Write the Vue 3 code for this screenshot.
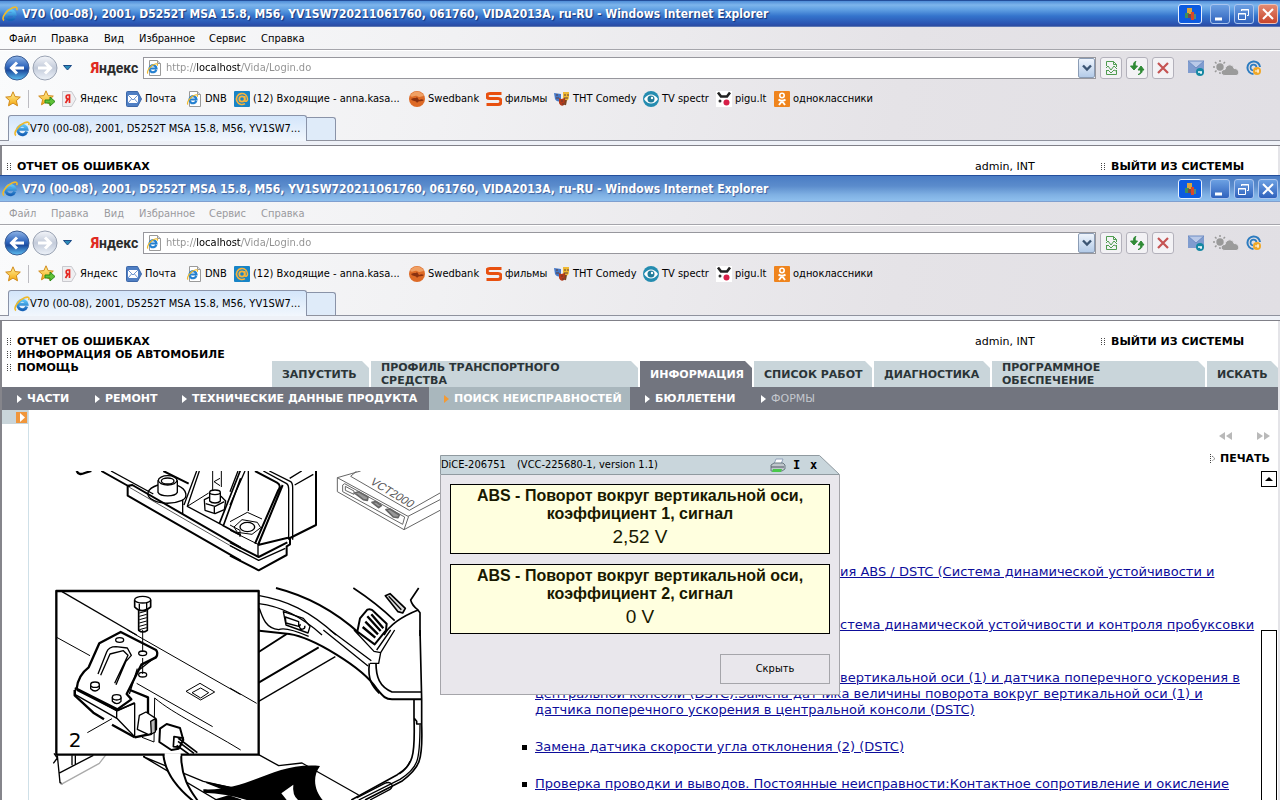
<script setup>
const title = 'V70 (00-08), 2001, D5252T MSA 15.8, M56, YV1SW720211061760, 061760, VIDA2013A, ru-RU - Windows Internet Explorer'
const tabTitle = 'V70 (00-08), 2001, D5252T MSA 15.8, M56, YV1SW7...'
const windows = [
  { id: 'back', inactive: false },
  { id: 'front', inactive: true }
]
const menu = ['Файл', 'Правка', 'Вид', 'Избранное', 'Сервис', 'Справка']
const favorites = [
  { icon: 'ya', label: 'Яндекс' },
  { icon: 'post', label: 'Почта' },
  { icon: 'iepage', label: 'DNB' },
  { icon: 'inbox', label: '(12) Входящие - anna.kasa...' },
  { icon: 'swed', label: 'Swedbank' },
  { icon: 'films', label: 'фильмы' },
  { icon: 'masks', label: 'ТНТ Comedy' },
  { icon: 'eye', label: 'TV spectr' },
  { icon: 'pigu', label: 'pigu.lt' },
  { icon: 'ok', label: 'одноклассники' }
]
const tabs = [
  { label: 'ЗАПУСТИТЬ' },
  { label: 'ПРОФИЛЬ ТРАНСПОРТНОГО СРЕДСТВА', wide: true },
  { label: 'ИНФОРМАЦИЯ', on: true },
  { label: 'СПИСОК РАБОТ' },
  { label: 'ДИАГНОСТИКА' },
  { label: 'ПРОГРАММНОЕ ОБЕСПЕЧЕНИЕ', wide: true },
  { label: 'ИСКАТЬ' }
]
const sections = ['ЧАСТИ', 'РЕМОНТ', 'ТЕХНИЧЕСКИЕ ДАННЫЕ ПРОДУКТА', 'ПОИСК НЕИСПРАВНОСТЕЙ', 'БЮЛЛЕТЕНИ', 'ФОРМЫ']
const signals = [
  { name: 'ABS - Поворот вокруг вертикальной оси, коэффициент 1, сигнал', value: '2,52 V' },
  { name: 'ABS - Поворот вокруг вертикальной оси, коэффициент 2, сигнал', value: '0 V' }
]
</script>

<template>
  <svg class="defs" aria-hidden="true">
    <defs>
      <linearGradient id="blueBall" x1="0" y1="0" x2="0" y2="1">
        <stop offset="0" stop-color="#8fb4e6" /><stop offset=".45" stop-color="#2f66bd" /><stop offset=".6" stop-color="#1c4c9f" /><stop offset="1" stop-color="#5fc0f2" />
      </linearGradient>
      <linearGradient id="greyBall" x1="0" y1="0" x2="0" y2="1">
        <stop offset="0" stop-color="#f4f6fa" /><stop offset=".5" stop-color="#c3cbda" /><stop offset="1" stop-color="#eef3fa" />
      </linearGradient>
      <linearGradient id="gold" x1="0" y1="0" x2="0" y2="1">
        <stop offset="0" stop-color="#fff3a0" /><stop offset="1" stop-color="#f5a70c" />
      </linearGradient>
      <linearGradient id="ieBlue" x1="0" y1="0" x2="0" y2="1">
        <stop offset="0" stop-color="#5cc4f7" /><stop offset="1" stop-color="#1763b8" />
      </linearGradient>
      <symbol id="ie" viewBox="0 0 16 16">
        <path d="M12.8 10.6A4.700 4.700 0 1 1 13 8.300H4" fill="none" stroke="url(#ieBlue)" stroke-width="3" />
        <path d="M2 14.5C-1.500 12 5 4 10.500 1.800 14 .4 16 1.200 14.600 4.200" fill="none" stroke="#efb92a" stroke-width="1.600" />
      </symbol>
      <symbol id="iepage" viewBox="0 0 16 16">
        <path d="M3.500.5h8l3 3v12h-11z" fill="#fff" stroke="#9a9a9a" />
        <path d="M11.500.5v3h3" fill="#ddd" stroke="#9a9a9a" />
        <path d="M10.300 9.900A3.500 3.500 0 1 1 10.500 8.500H4.500" fill="none" stroke="#2580d0" stroke-width="2.200" />
        <path d="M2 13.500C0 11.500 5 5 9 4c2-.6 3 0 2.200 1.800" fill="none" stroke="#efb92a" stroke-width="1.200" />
      </symbol>
      <symbol id="ya" viewBox="0 0 16 16">
        <path d="M1.500.5h9L15 8l-4.500 7.500h-9z" fill="#efeff1" stroke="#c9c9ce" />
        <path d="M8.500 12V4H7C4.600 4 4.600 8 7 8h1.500M7 8l-2.500 4" fill="none" stroke="#e52620" stroke-width="1.700" />
      </symbol>
      <symbol id="post" viewBox="0 0 16 16">
        <path d="M1.500.5h10L15.500 8l-4 7.500h-10a1 1 0 0 1-1-1v-13a1 1 0 0 1 1-1z" fill="#4f7fc4" stroke="#3c67a8" />
        <path d="M2 4h10v8H2z" fill="#fff" /><path d="M2 4l5 5 5-5M2 12l3.500-4M12 12L8.500 8" fill="none" stroke="#6c94cf" />
      </symbol>
      <symbol id="inbox" viewBox="0 0 16 16">
        <rect width="16" height="16" rx="1" fill="#1784c7" />
        <circle cx="8" cy="8" r="2.700" fill="none" stroke="#f7b43c" stroke-width="1.800" />
        <path d="M10.800 5v4.500c.5 1.500 2.700.8 2.700-1.500a5.500 5.500 0 1 0-2.500 4.600" fill="none" stroke="#f7b43c" stroke-width="1.600" />
      </symbol>
      <symbol id="swed" viewBox="0 0 16 16">
        <circle cx="8" cy="8" r="8" fill="#dd6a26" /><path d="M1 5c3-6 11-6 14 0-3 0-4 2-7 0-3-1-4 2-7 0z" fill="#f0a064" />
        <path d="M2 8c3-2 5 0 6-2l2 3c2-1 3-1 5 0-2 2-5 0-7 3-1-3-4-1-6-4z" fill="#8b3210" />
      </symbol>
      <symbol id="films" viewBox="0 0 16 16">
        <path d="M15.500 2.500H4c-4 0-4 5 0 5h8c4 0 4 6 0 6H.5" fill="none" stroke="#e8500f" stroke-width="3.200" />
      </symbol>
      <symbol id="masks" viewBox="0 0 16 16">
        <path d="M0 2l7 1v6c-2 3-5 1-6-1z" fill="#4478c8" /><path d="M9 1h6v5c0 4-4 5-6 3z" fill="#efb934" /><path d="M5 7c3 2 4 0 6 0v5c-1 4-5 3-6 0z" fill="#b53b1b" />
        <path d="M2 4h2M10 4h2m1 0h2M10 7h4M7 10h2m-1 3h2M2 7h3" stroke="#613d36" /><path d="M12 9l-1 5" stroke="#7b4321" stroke-width="2" />
      </symbol>
      <symbol id="eye" viewBox="0 0 16 16">
        <circle cx="8" cy="8" r="8" fill="#248cb0" /><path d="M1 8c4-6 10-6 14 0-4 6-10 6-14 0z" fill="#fff" /><circle cx="8" cy="8" r="3.500" fill="#217b99" /><circle cx="9" cy="7" r="1.200" fill="#fff" />
      </symbol>
      <symbol id="pigu" viewBox="0 0 16 16">
        <rect width="16" height="16" fill="#fff" /><path d="M2 1.500l3 4h6l3-4" fill="none" stroke="#222" stroke-width="2.600" /><circle cx="10.500" cy="11.500" r="3" fill="#d71f48" /><circle cx="4" cy="10" r="1.500" fill="#333" />
      </symbol>
      <symbol id="ok" viewBox="0 0 16 16">
        <rect width="16" height="16" rx="1" fill="#ef841d" /><circle cx="8" cy="4.500" r="2.200" fill="none" stroke="#fff" stroke-width="1.600" />
        <path d="M4.500 8.500c2 1.600 5 1.600 7 0M8 10l-3 4m3-4l3 4" fill="none" stroke="#fff" stroke-width="2" />
      </symbol>
      <symbol id="star" viewBox="0 0 16 16">
        <path d="M8 .8l2.100 4.800 5.200.5-3.900 3.500 1.100 5.200L8 12.100l-4.500 2.700 1.100-5.200L.7 6.100l5.200-.5z" fill="url(#gold)" stroke="#d08a1b" />
      </symbol>
      <symbol id="flag" viewBox="0 0 14 14">
        <path d="M4 1h5v6H4z" fill="#d9a53c" /><path d="M2 6h4v5H2z" fill="#3f8f5a" /><path d="M8 5h3v8H8z" fill="#d94829" /><path d="M5 7h3v4H5z" fill="#7a4a4a" /><path d="M11 7h2v5h-2z" fill="#4f8e7c" />
      </symbol>
    </defs>
  </svg>

  <div class="desktop">
    <section v-for="w in windows" :key="w.id" class="window" :class="{ inactive: w.inactive }">
      <header class="titlebar">
        <svg class="i16"><use href="#ie" /></svg>
        <h1>{{ title }}</h1>
        <button class="lang" aria-label="Язык"><svg width="14" height="14"><use href="#flag" /></svg></button>
        <button class="wbtn" aria-label="Свернуть"><svg width="18" height="18"><path d="M4 14h7" stroke="#fff" stroke-width="3" /></svg></button>
        <button class="wbtn" aria-label="Восстановить"><svg width="18" height="18" fill="none" stroke="#fff"><path d="M3.500 8.500h7v6h-7zM3 9h8M6.500 6V4.500h7v6H12M6 5h8" /></svg></button>
        <button class="wbtn close" aria-label="Закрыть"><svg width="18" height="18"><path d="M4 4l10 10M14 4L4 14" stroke="#fff" stroke-width="2" /></svg></button>
      </header>

      <div class="chrome">
        <nav class="menu"><button v-for="m in menu" :key="m">{{ m }}</button></nav>

        <div class="address-row">
          <div class="travel">
            <button aria-label="Назад"><svg width="26" height="26"><circle cx="13" cy="13" r="12" fill="url(#blueBall)" stroke="#3b5d94" /><path d="M20 13H8m5-5.500L7.500 13l5.500 5.500" fill="none" stroke="#fff" stroke-width="3" /></svg></button>
            <button aria-label="Вперед"><svg width="26" height="26"><circle cx="13" cy="13" r="12" fill="url(#greyBall)" stroke="#9aa3b3" /><path d="M6 13h12m-5-5.500l5.500 5.500-5.500 5.500" fill="none" stroke="#fff" stroke-width="3" /></svg></button>
            <button class="recent" aria-label="Последние страницы"><svg width="9" height="6"><path d="M.5.5h8L4.500 5z" fill="#2b8bb8" stroke="#1c4a86" /></svg></button>
          </div>
          <div class="yandex"><b>Я</b>ндекс</div>
          <div class="address">
            <svg class="i16"><use href="#iepage" /></svg>
            <input type="text" value="http://localhost/Vida/Login.do" aria-label="Адрес" />
            <button aria-label="Показать список"><svg width="10" height="8"><path d="M1 1.500l4 4 4-4" fill="none" stroke="#3c5573" stroke-width="2.400" /></svg></button>
          </div>
          <div class="tools">
            <button aria-label="Совместимость"><svg width="16" height="16" fill="none" stroke="#4f9c50"><path d="M3.500 6V1.500h7l3 3V7M10.500 1.500v3h3M3.500 10v4.500h10V10M3 8l2-2 3 4 3-4 3 3M3 12l2-2 3 3 3-3 2 1" /></svg></button>
            <button aria-label="Обновить"><svg width="16" height="16"><path d="M7 1.500C4 2 4.500 5 4.500 6H1.500L5 10l3.500-4H6.300C6.300 4 6 3 7 1.500zM9 14.500c3-.5 2.500-3.500 2.500-4.500H9l3-4 3 4h-1.700c0 2-.8 4-4.300 4.500z" fill="#2f8a35" stroke="#2f8a35" /></svg></button>
            <button aria-label="Остановить"><svg width="16" height="16"><path d="M3 3l10 10M13 3L3 13" stroke="#c55353" stroke-width="2.200" /></svg></button>
          </div>
          <div class="extras">
            <svg width="17" height="16"><path d="M0 1h16v12H0z" fill="#7f9ccf" /><path d="M0 1h16L8 8z" fill="#b9c9e8" stroke="#6f8dc3" /><circle cx="12" cy="12" r="4" fill="#1688a3" /><path d="M10 12h4m-1 0v2" stroke="#fff" stroke-width="1.300" /></svg>
            <svg width="27" height="16"><circle cx="8" cy="7" r="3.700" fill="#999" /><g stroke="#999" stroke-width="1.500"><path d="M8 0v2M1 7h2M3 2l1.500 1.500M13 2l-1.500 1.500M3 12l1.500-1.500M8 12v2" /></g><path d="M13 15.500c-5 0-5-6 0-6 1-6 8-6 9-1 6 0 6 7 2 7z" fill="#9b9b9b" stroke="#e3e1e6" /></svg>
            <svg width="16" height="16"><path d="M14 7a6.300 6.300 0 1 0-6.500 7" fill="none" stroke="#2d7cc0" stroke-width="2" /><path d="M10.500 7A3 3 0 1 0 7 10.500" fill="none" stroke="#2d7cc0" stroke-width="1.700" /><circle cx="11" cy="11" r="4" fill="#f0a829" /><path d="M9 11h4m-1-2v4" stroke="#fff" /></svg>
          </div>
        </div>

        <nav class="favbar">
          <button class="star" aria-label="Избранное"><svg class="i16"><use href="#star" /></svg></button>
          <button class="star add" aria-label="Добавить в избранное"><svg width="18" height="17"><use href="#star" width="16" height="16" /><path d="M7 10h5V7l5 4.500-5 4.500v-3H7z" fill="#5fc238" stroke="#2c8a18" /></svg></button>
          <div class="favs">
            <a v-for="f in favorites" :key="f.label" href="#"><svg class="i16"><use :href="'#' + f.icon" /></svg>{{ f.label }}</a>
          </div>
        </nav>

        <div class="browser-tabs">
          <button class="page-tab"><svg class="i16"><use href="#ie" /></svg><span>{{ tabTitle }}</span></button>
          <button class="new-tab" aria-label="Новая вкладка"></button>
        </div>
      </div>

      <div class="page">
        <div class="page-head">
          <div class="links">
            <a href="#"><svg width="4" height="8"><path d="M.5 0v8M3.500 0v8" stroke="#444" stroke-dasharray="1 1" /></svg>ОТЧЕТ ОБ ОШИБКАХ</a>
            <template v-if="w.inactive">
              <a href="#"><svg width="4" height="8"><path d="M.5 0v8M3.500 0v8" stroke="#444" stroke-dasharray="1 1" /></svg>ИНФОРМАЦИЯ ОБ АВТОМОБИЛЕ</a>
              <a href="#"><svg width="4" height="8"><path d="M.5 0v8M3.500 0v8" stroke="#444" stroke-dasharray="1 1" /></svg>ПОМОЩЬ</a>
            </template>
          </div>
          <span class="user">admin, INT</span>
          <a class="logout" href="#"><svg width="4" height="8"><path d="M.5 0v8M3.500 0v8" stroke="#444" stroke-dasharray="1 1" /></svg>ВЫЙТИ ИЗ СИСТЕМЫ</a>
        </div>

        <template v-if="w.inactive">
          <nav class="tabs">
            <button v-for="t in tabs" :key="t.label" :class="{ on: t.on, wide: t.wide }">{{ t.label }}</button>
          </nav>
          <nav class="sections">
            <button v-for="(s, i) in sections" :key="s" :class="{ on: i === 3, off: i === 5 }"><svg width="5" height="8"><path d="M0 0l5 4-5 4z" fill="currentColor" /></svg>{{ s }}</button>
          </nav>

          <div class="body">
            <aside><button aria-label="Открыть панель"><svg width="11" height="11"><path d="M4 1l5 4.500L4 10z" fill="#fff" /></svg></button></aside>
            <main>
              <div class="toolbar">
                <div class="pager">
                  <button aria-label="Предыдущий"><svg width="13" height="8"><path d="M6 0v8L0 4zM13 0v8L7 4z" fill="#b9b9b9" /></svg></button>
                  <button aria-label="Следующий"><svg width="13" height="8"><path d="M0 0v8l6-4zM7 0v8l6-4z" fill="#b9b9b9" /></svg></button>
                </div>
                <a href="#"><svg width="6" height="9"><path d="M.5 0v9" stroke="#444" stroke-dasharray="1 1" /><path d="M2 2l3 2.500L2 7" fill="none" stroke="#444" stroke-dasharray="1 1" /></svg>ПЕЧАТЬ</a>
              </div>

              <div class="content">
                <svg class="drawing" viewBox="0 18 1230 987" fill="none" stroke="#000" stroke-width="4" stroke-linejoin="round" role="img" aria-label="Расположение датчика">
                  <!-- control unit bracket -->
                  <g>
                    <path d="M140 18q6 14 24 6l20-6" stroke-width="7" />
                    <path d="M214 18L300 66M400 18l76 38" stroke-width="6" />
                    <path d="M243 18L370 87" />
                    <path d="M293 62v30L632 287M293 62l14-2L632 248" stroke-width="6" />
                    <path d="M300 68L632 260" stroke-width="2" />
                    <path d="M384 60c-36 12-36 32-20 42 20 14 60 18 92 4 18-8 16-32-12-44" />
                    <path d="M384 46v36c8 14 50 14 58 0V46" fill="#fff" />
                    <ellipse cx="413" cy="46" rx="28" ry="14" fill="#fff" /><ellipse cx="413" cy="48" rx="19" ry="9" />
                    <path d="M458 104v44M500 18l-38 102M508 18l-36 106 108 58" />
                    <path d="M548 18v60M574 18v48M570 40l-18 10 18 12M472 124l64-40" stroke-width="3" />
                    <path d="M632 14l-64 162M632 40l-52 142 52 28" stroke-width="5" />
                    <path d="M523 104l20-10h30l14 14-4 26-28 12-30-10z" fill="#fff" /><path d="M527 116l28 8 28-14M553 124v20M539 82v26c6 8 26 8 32 0V82" fill="#fff" /><ellipse cx="555" cy="82" rx="16" ry="7" fill="#fff" />
                  </g>
                  <g transform="translate(600 0)">
                    <path d="M24 18L0 80M45 18L0 120M55 18v120" />
                    <path d="M75 18l66 35q14 8 4 22L75 236M158 60L84 240M84 240l90-22" stroke-width="6" />
                    <path d="M100 18l70 38q6 4 6 16v150M118 18l64 32q6 4 6 18v156" />
                    <path d="M215 18l-36 22M250 28l-56 32" />
                    <path d="M258 18v162l-84 42" stroke-width="6" />
                    <path d="M0 170l52-28 44 20M0 196l88 44M12 186l24-22 46 8 10 16-26 20-44-6z" stroke-width="3" /><ellipse cx="52" cy="186" rx="22" ry="14" />
                    <path d="M0 232l86 44 86-44M0 272l86 44 84-46v-26l10-6v-20" stroke-width="6" /><path d="M0 242l86 44 80-36M84 240v36" />
                    <path d="M0 180l30 16v20" stroke-width="3" />
                    <g stroke="#666" stroke-width="3">
                      <path d="M392 18L322 38v42l200 114 108-58M322 38l212 116 96-50M380 18l-18 16 176 102 92-52M522 194l14-40M338 60v20l180 98 6-22L344 56z" />
                      <path d="M346 64l26 14v10l-26-12z" />
                      <path d="M374 84l12-4 28 16-2 10-12-2zM426 112l12-2 16 12-8 6zM468 134l12-2 28 18-4 8-14-2z" fill="#999" stroke-width="5" />
                    </g>
                    <text transform="translate(418 55) rotate(31) skewX(-12)" font-family="Liberation Sans" font-size="34" fill="#555" stroke="none">VCT2000</text>
                  </g>
                  <!-- car interior -->
                  <g transform="translate(600 0)">
                    <path d="M138 369q140 36 250 136" stroke-width="6" />
                    <path d="M88 392c80 14 150 44 230 118M86 416c70 8 130 40 190 94M88 430c10 30 20 60 58 64q20-10 90 20" />
                    <path d="M160 440l60 20 20 24-6 20-66-24zM166 456l40 14v14l-38-10zM212 478a8 8 0 1 0 12 4" />
                    <path d="M370 369q70 46 124 98M566 369l-24 36q4 16 20 28l8 10v70M566 434c-60 24-90 50-104 76" stroke-width="5" />
                    <path d="M466 392l14-6 46 44-8 14-14-4z" fill="#ddd" stroke-width="5" /><path d="M476 394l38 40" />
                    <path d="M412 434q12-4 20 6l38 36-2 20-34 42-52-38 8-40z" fill="#fff" stroke-width="6" />
                    <path d="M398 486l38 32M406 470l38 38M412 454l40 44M424 448l36 42" stroke-width="7" />
                  </g>
                  <g transform="translate(600 495)">
                    <path d="M86 66l84-54M86 158l180-106" stroke-width="6" /><path d="M86 214L316 80" />
                    <path d="M88 2l90 10c70 10 220 100 262 164 20 24 26 32 46 32h88" stroke-width="6" />
                    <path d="M280 0l134 108M300 0l124 92M372 0l60 64 20 4-6 32h-26M452 68L494 0M440 60l42-60" />
                    <path d="M418 100c-6 50 10 70 30 90M438 100c0 40 10 70 48 86h88" stroke-width="5" />
                    <path d="M570 0l5 206v78c4 110-6 130-60 170l-110 56M552 210v54l8 10v8h14M552 264c4 120-4 140-50 170L364 510" stroke-width="5" />
                    <path d="M570 284c0 110-6 130-60 164l-124 62M540 394q-10 24-32 38M380 504l84-44c20-8 30 8 16 18l-60 32" />
                    <path d="M86 374l60 33 70-8 170 96" />
                    <path d="M-80 478C60 484 130 396 270 408c-26 36-14 76 8 102H50q-60-20-130-22z" fill="#000" stroke="none" />
                    <path d="M154 490l36-26q-4 30 14 46h-34z" fill="#fff" stroke="none" />
                  </g>
                  <g transform="translate(0 495)">
                    <path d="M72 370l10 14-12 16M82 376l8 82 8 4M126 376v30M136 376v28M86 430l104-54" /><path d="M92 464l116-64 20-26" stroke="#aaa" />
                    <path d="M340 380l180 74 112 26M340 380l220 130" />
                    <path d="M530 458l102 20v12l-50-12zM556 510l40-12 36 12z" fill="#000" />
                    <path d="M400 374c6 60 50 110 104 150 20-2-54-50-50-150z" fill="#fff" stroke-width="6" />
                  </g>
                  <!-- detail frame -->
                  <rect x="79" y="378" width="607" height="491" fill="#fff" stroke-width="7" />
                  <path d="M96 380L320 510" />
                  <g>
                    <path d="M326 430v66q12 10 26 0v-66z" fill="#fff" stroke-width="5" />
                    <path d="M328 444l22-6M328 454l22-6M328 464l22-6M328 474l22-6M328 484l22-6M328 494l22-6" stroke-width="3" />
                    <path d="M314 404v22q20 22 48 0v-22" fill="#fff" stroke-width="5" /><ellipse cx="338" cy="404" rx="24" ry="10" fill="#fff" /><path d="M328 416v18M350 414v18" />
                  </g>
                  <g transform="translate(0 495)">
                    <path d="M80 22l100 55M292 0l340 194M320 160l228 130M374 204c60 50 150 90 258 156M374 204l-2 132-36-14" stroke-width="3" />
                    <path d="M600 174l80 46" stroke-width="3" />
                    <path d="M468 184l42-24 44 26-42 24zM486 188l26-14 24 14-24 16z" stroke-width="3" />
                    <path d="M300 180l54 22v54l24 14v28l-16 14-48 10M134 180v16l56 52 32 20M246 284l68 38" fill="#fff" stroke-width="7" />
                    <path d="M272 6l106 54q8 10 0 22l-44 22-44 88 14 16-42 30L140 176q4-40 36-64l32-72z" fill="#fff" stroke-width="7" />
                    <path d="M136 174v20l126 72 52 54V220l-54 22zM260 242v24M322 116l-24 76M380 78l-50 40" stroke-width="4" />
                    <path d="M140 180l122 62 52-24" stroke-width="5" />
                    <path d="M204 132l26-66q6-16 28-16l34 4 12 22-16 18-30 70M212 136l28-64 40-10 14 14-40 84" />
                    <g fill="#fff"><ellipse cx="269" cy="30" rx="12" ry="7" /><ellipse cx="338" cy="70" rx="12" ry="7" /><ellipse cx="338" cy="134" rx="12" ry="7" /><path d="M182 164v12q14 14 26 0v-12M247 202v12q14 14 26 0v-12" /><ellipse cx="195" cy="164" rx="13" ry="8" /><ellipse cx="260" cy="202" rx="13" ry="8" /></g>
                    <path d="M338 0v66M338 84v48" stroke-width="3" />
                    <path d="M328 256l20-10 30 20-6 40-16 8-34-16z" fill="#fff" /><path d="M362 274l14-8v40l-12 6z" fill="#bbb" />
                    <path d="M390 296l20-14 40 12 10 36-14 26-22 4-36-24z" fill="#fff" stroke-width="6" /><path d="M432 320l28 4-10 28-20-2zM444 324l58 44M444 334l48 36M440 346l36 26" stroke-width="5" />
                    <path d="M172 308l74-42" stroke-width="3" />
                    <path d="M404 374h48" stroke="#fff" stroke-width="9" />
                    <text x="116" y="350" font-family="DejaVu Sans" font-size="60" fill="#000" stroke="none">2</text>
                  </g>
                </svg>

                <ul class="procedures">
                  <li class="two-lines"><a href="#" class="tail">ия ABS / DSTC (Система динамической устойчивости и</a></li>
                  <li class="two-lines"><a href="#" class="tail">стема динамической устойчивости и контроля пробуксовки</a></li>
                  <li><a href="#"><span class="tail">вертикальной оси (1) и датчика поперечного ускорения в</span><br />центральной консоли (DSTC).Замена датчика величины поворота вокруг вертикальной оси (1) и<br />датчика поперечного ускорения в центральной консоли (DSTC)</a></li>
                  <li><a href="#">Замена датчика скорости угла отклонения (2) (DSTC)</a></li>
                  <li><a href="#">Проверка проводки и выводов. Постоянные неисправности:Контактное сопротивление и окисление</a></li>
                </ul>

                <div class="scroll">
                  <button aria-label="Вверх"><svg width="8" height="4"><path d="M0 4l4-4 4 4z" /></svg></button>
                  <div class="thumb"></div>
                </div>
              </div>
            </main>

            <div class="dialog" role="dialog" aria-label="DiCE-206751">
              <div class="dialog-head">
                <svg class="cap" viewBox="0 0 400 20" preserveAspectRatio="none"><path d="M.5 19.500V.5h379l20 19z" fill="#c9d6dc" stroke="#909aa0" /></svg>
                <span class="device">DiCE-206751</span>
                <span class="version">(VCC-225680-1, version 1.1)</span>
                <button aria-label="Печать"><svg width="16" height="15"><path d="M4 6l2-5h7l-2 5z" fill="#fff" stroke="#91a2ba" /><path d="M1 7l3-2h9l2 2v4l-3 2H1z" fill="#bfc7cc" stroke="#6b7a82" /><path d="M1 9h13" stroke="#556" /><path d="M3 11h9l-1 3H2z" fill="#49c84a" /></svg></button>
                <button class="letter">I</button>
                <button class="letter">x</button>
              </div>
              <div class="dialog-body">
                <div v-for="s in signals" :key="s.value" class="signal">
                  <strong>{{ s.name }}</strong>
                  <span>{{ s.value }}</span>
                </div>
                <button class="hide">Скрыть</button>
              </div>
            </div>
          </div>
        </template>
      </div>
    </section>
  </div>
</template>

<style>
body { margin: 0; background: #fff; }
</style>

<style scoped>
* { box-sizing: border-box; }
button { margin: 0; padding: 0; border: 0; background: none; font: inherit; color: inherit; cursor: pointer; text-align: left; }
a { color: inherit; text-decoration: none; }
svg { display: block; flex: none; }
.defs { position: absolute; width: 0; height: 0; }
.i16 { width: 16px; height: 16px; }
.desktop { height: 100vh; overflow: hidden; display: flex; flex-direction: column; font: 11px/14px "DejaVu Sans Condensed", "Noto Sans", sans-serif; color: #000; }
.window { flex: none; }
.window.inactive { flex: 1; min-height: 0; display: flex; flex-direction: column; }

.titlebar { flex: none; height: 27px; padding: 0 2px 0 2px; display: flex; align-items: center; gap: 4px; border-top: 1px solid #244f9c; border-bottom: 1px solid #5b77b4; background: linear-gradient(#4f8ed8, #7db5ec 16%, #5f9fe2 35%, #3474cc 60%, #2a53b0 92%, #2d4ba0); }
.titlebar h1 { flex: 1; min-width: 0; margin: 0; white-space: nowrap; overflow: hidden; font: bold 12px/20px "DejaVu Sans Condensed", "Noto Sans", sans-serif; color: #fff; text-shadow: 1px 1px 1px #143077; }
.titlebar .lang { width: 24px; height: 20px; margin-right: 4px; padding-left: 4px; border: 1px solid #e4f0ff; border-radius: 3px; background: #0d5be0; }
.wbtn { width: 20px; height: 20px; border: 1px solid #a9c4ee; border-radius: 3px; background: linear-gradient(#6ca0e2, #2f62bd); }
.wbtn.close { background: linear-gradient(#e38a72, #c8452b); border-color: #eec0b4; }
.inactive .titlebar { background: linear-gradient(#4a7cc4, #5b8ccc 40%, #7fb0e3 75%, #8fc0ee); border-bottom-color: #7f9fcf; }
.inactive .titlebar h1 { text-shadow: 1px 1px 1px #3a5f9f; }
.inactive .wbtn.close { background: linear-gradient(#6ca0e2, #2f62bd); border-color: #a9c4ee; }

.chrome { flex: none; background: linear-gradient(100deg, #fafbfc, #f1f1f3 35%, #e5e3e7 70%, #e1dfe4); }
.menu { height: 23px; padding: 2px 0 0 9px; display: grid; grid-template-columns: 42px 53px 35px 70px 52px auto; align-items: center; border-bottom: 1px solid #a5a5ab; }
.inactive .menu { color: #9a9a9e; }
.address-row { height: 35px; padding: 0 18px 1px 4px; display: flex; align-items: center; border-top: 1px solid #fff; }
.travel { width: 87px; display: flex; align-items: center; gap: 2px; }
.recent { margin-left: 3px; }
.yandex { width: 52px; font: bold 14px/22px Roboto, "Liberation Sans", sans-serif; color: #2b2b2b; white-space: nowrap; }
.yandex b { color: #e02a22; }
.address { flex: 1; height: 22px; padding: 0 0 0 2px; display: flex; align-items: center; gap: 4px; border: 1px solid #97979d; background: #fff; }
.address input { flex: 1; min-width: 0; height: 20px; padding: 0; border: 0; outline: 0; font: inherit; color: transparent; background: linear-gradient(90deg, #8f8f8f 31px, #000 31px, #000 75px, #8f8f8f 75px); -webkit-background-clip: text; background-clip: text; }
.address button { width: 17px; height: 20px; display: grid; place-items: center; border: 1px solid #8b9cb5; border-radius: 2px; background: linear-gradient(#eef4fc, #b4cbe8); }
.tools { margin-left: 4px; display: flex; gap: 4px; }
.tools button { width: 22px; height: 22px; display: grid; place-items: center; border: 1px solid #b3b1bb; border-radius: 3px; background: #f3f2f5; }
.extras { margin-left: 14px; display: flex; gap: 7px; }
.favbar { height: 27px; padding-left: 5px; display: flex; align-items: center; }
.star { width: 24px; height: 18px; border-right: 1px solid #bcbcc2; }
.star.add { width: 32px; padding-left: 9px; border: 0; }
.favs { display: grid; grid-template-columns: 65px 60px 48px 175px 77px 68px 89px 73px 58px auto; }
.favs a { display: flex; align-items: center; gap: 3px; white-space: nowrap; }
.browser-tabs { height: 34px; padding: 3px 0 5px 8px; display: flex; border-bottom: 1px solid #808088; background: linear-gradient(transparent 28px, #8f929e 28px, #8f929e 29px, #eef1f7 29px); }
.page-tab { width: 299px; height: 26px; padding: 0 5px; display: flex; align-items: center; gap: 0; border: 1px solid #8a93a8; border-bottom: 0; border-radius: 3px 3px 0 0; background: linear-gradient(#d3e5fa, #f2f7fd); }
.page-tab span { white-space: nowrap; overflow: hidden; }
.new-tab { width: 29px; height: 23px; margin-top: 2px; border: 1px solid #8a93a8; border-left: 0; border-bottom: 0; border-radius: 0 3px 0 0; background: #dfebf9; }

.page { background: #fff; border-left: 2px solid #85858b; border-right: 2px solid #e4e4e8; }
.inactive .page { flex: 1; min-height: 0; display: flex; flex-direction: column; }
.page-head { flex: none; height: 29px; padding: 14px 33px 0 5px; display: flex; font: 11px/13px "DejaVu Sans", sans-serif; }
.inactive .page-head { height: 40px; }
.page-head a { display: flex; align-items: center; gap: 6px; font-weight: bold; white-space: nowrap; }
.links { flex: 1; min-width: 0; display: flex; flex-direction: column; }
.user { width: 126px; }
.logout { height: 13px; width: 144px; }
.tabs { flex: none; padding-left: 270px; display: grid; grid-template-columns: 97fr 267fr 112fr 118fr 116fr 213fr 71fr; gap: 2px; font: bold 11px/13px "DejaVu Sans", sans-serif; color: #2b3437; }
.tabs button { height: 26px; padding-left: 10px; background: #c9d5da; clip-path: polygon(0 0, calc(100% - 7px) 0, 100% 7px, 100% 100%, 0 100%); }
.tabs button.wide { padding-right: 30px; }
.tabs button.on { background: #72757f; color: #fff; }
.sections { flex: none; height: 23px; display: grid; grid-template-columns: 78px 87px 262px 201px 116px auto; background: #72757f; color: #fff; font: bold 11px/23px "DejaVu Sans", sans-serif; }
.sections button { display: flex; align-items: center; gap: 5px; padding-left: 15px; white-space: nowrap; }
.sections button.on { background: #a9b7bd; }
.sections button.on svg { color: #f39a33; }
.sections button.off { font-weight: normal; color: #c3c7cd; }
.sections button.off svg { color: #fff; }

.body { position: relative; flex: 1; min-height: 0; display: flex; }
aside { width: 27px; flex: none; border-right: 1px solid #cfe0e8; }
aside button { display: block; width: 26px; height: 14px; padding: 1px 0 0 14px; background: #c9d5da; }
aside svg { background: #f0963c; }
main { flex: 1; min-width: 0; display: flex; flex-direction: column; }
.toolbar { flex: none; height: 61px; padding: 22px 8px 0 0; display: flex; flex-direction: column; align-items: flex-end; gap: 12px; font: bold 11px/13px "DejaVu Sans", sans-serif; }
.toolbar a { display: flex; align-items: center; gap: 4px; }
.pager { display: flex; gap: 25px; }
.content { flex: 1; min-height: 0; display: flex; overflow: hidden; }
.drawing { width: 410px; height: 329px; margin-left: 1px; }
.procedures { flex: 1; min-width: 0; margin: 0; padding: 93px 0 0 95px; list-style: none; font: 13px/16px "DejaVu Sans", sans-serif; color: #0d0d9a; white-space: nowrap; }
.procedures li { position: relative; margin-bottom: 21px; }
.procedures li::before { content: ""; position: absolute; left: -13px; top: 6px; width: 5px; height: 5px; background: #000; }
.procedures a { text-decoration: underline; }
.procedures .two-lines { height: 32px; }
.tail { margin-left: 305px; }
.scroll { width: 17px; flex: none; display: flex; flex-direction: column; }
.scroll button { width: 16px; height: 16px; display: grid; place-items: center; border: 1px solid #000; }
.thumb { flex: 1; width: 16px; margin-top: 143px; border: 1px solid #000; border-bottom: 0; }

.dialog { position: absolute; left: 438px; top: 45px; width: 400px; }
.dialog-head { position: relative; height: 20px; display: flex; align-items: center; padding: 0 20px 0 1px; }
.cap { position: absolute; left: 0; top: 0; width: 100%; height: 20px; }
.dialog-head span, .dialog-head button { position: relative; }
.device { width: 76px; }
.version { flex: 1; }
.letter { width: 17px; padding-left: 7px; font: bold 12px/14px "DejaVu Sans Mono", monospace; }
.dialog-body { padding: 9px 9px 10px; border: 1px solid #a5a5aa; border-top: 0; background: #e9e7ec; display: flex; flex-direction: column; gap: 10px; }
.signal { min-height: 70px; padding: 2px 20px; border: 1px solid #000; background: #ffffdf; text-align: center; font: 19px/24px "Liberation Sans", sans-serif; color: #191900; }
.signal strong { display: block; font-size: 16px; line-height: 18px; }
.signal span { display: block; margin-top: 2px; }
.hide { align-self: flex-end; width: 110px; height: 30px; margin-top: 10px; border: 1px solid #a5a5aa; text-align: center; }
</style>
